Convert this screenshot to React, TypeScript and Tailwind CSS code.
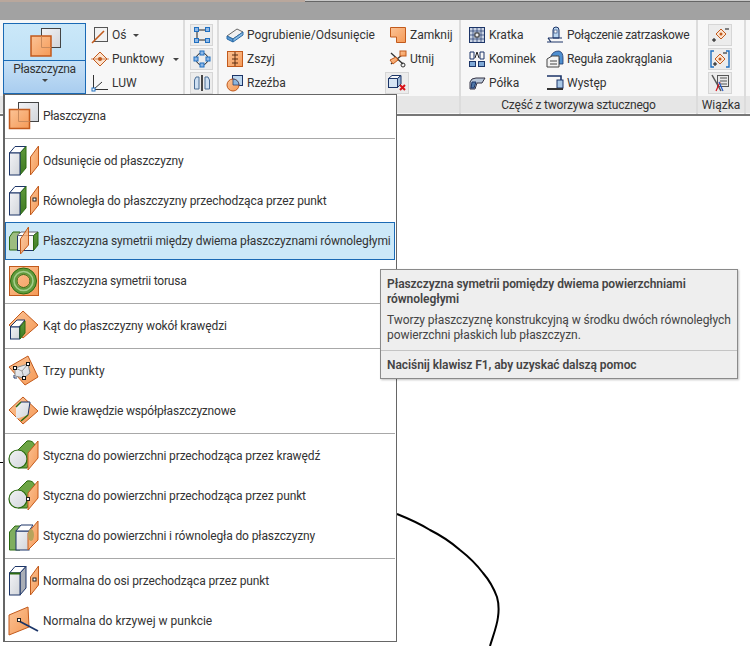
import type { ReactNode } from "react";

const OR = "url(#go)";
const ORD = "#c25a1c";
const GR = "url(#gg)";
const GRD = "#2b6a10";
const NV = "#1c3568";
const GY = "url(#gb)";
const BL = "#1f6fc0";

function Ic({ children, w = 34, h = 40 }: { children: ReactNode; w?: number; h?: number }) {
  return (
    <svg width={w} height={h} viewBox={`0 0 ${w} ${h}`} className="shrink-0">
      {children}
    </svg>
  );
}

// bryla z zielonym bokiem
function Box({ side = GR }: { side?: string }) {
  return (
    <>
      <polygon points="2.5,12 8,5.5 19,5.5 13,12" fill="#fff" stroke={NV} />
      <polygon points="13,12 19,5.5 19,27 13,34" fill={side} stroke={GRD} />
      <rect x="2.5" y="12" width="10.5" height="22" fill={GY} stroke={NV} />
    </>
  );
}

function SidePlane({ dot }: { dot?: boolean }) {
  return (
    <>
      <polygon points="23.5,16 31.5,5 31.5,24 23.5,34" fill={OR} stroke={ORD} />
      {dot && <rect x="26" y="17" width="3" height="3" fill="#fff" stroke="#222" strokeWidth="1" />}
    </>
  );
}

function Cyl() {
  return (
    <>
      <path d="M11,14 L20,5 C26,4 28,8 28,12 L20,32 L11,32 Z" fill="#6da544" stroke={GRD} />
      <circle cx="11" cy="23" r="9" fill={GY} stroke={GRD} strokeWidth="1.2" />
    </>
  );
}

const PlaneIcon = () => (
  <Ic>
    <rect x="11.5" y="6.5" width="20" height="19" fill={GY} stroke="#444" />
    <rect x="2.5" y="13.5" width="20" height="19" fill={OR} stroke={ORD} strokeWidth="1.5" />
    <path d="M11.5,13.5 V25.5 H22.5" fill="none" stroke="#c98a5c" />
  </Ic>
);
const OffsetIcon = () => (
  <Ic>
    <Box />
    <SidePlane />
  </Ic>
);
const ParallelIcon = () => (
  <Ic>
    <Box />
    <SidePlane dot />
  </Ic>
);
const MidIcon = () => (
  <Ic>
    <polygon points="2.5,16 6,11 13,11 13,29 2.5,29" fill="#9dbd80" stroke={GRD} />
    <rect x="10.5" y="14.5" width="16" height="15" fill="#f6f7f8" stroke={NV} />
    <polygon points="10,14.5 14,11 31,11 26.5,14.5" fill="#fff" stroke="#667" />
    <polygon points="26.5,29.5 31,24 31,11 26.5,14.5" fill={GR} stroke={GRD} />
    <polygon points="13.5,18 21.5,6 21.5,24 13.5,33" fill={OR} fillOpacity="0.85" stroke={ORD} />
  </Ic>
);
const TorusIcon = () => (
  <Ic>
    <rect x="2.5" y="5.5" width="29" height="29" fill={OR} stroke={ORD} />
    <circle cx="16.5" cy="20" r="10" fill="none" stroke="#5f9a3c" strokeWidth="6" />
    <circle cx="16.5" cy="20" r="9.5" fill="none" stroke="#a5cc8a" strokeWidth="1.6" />
    <circle cx="16.5" cy="20" r="13" fill="none" stroke={GRD} />
    <circle cx="16.5" cy="20" r="6.5" fill="none" stroke={GRD} />
  </Ic>
);
const AngleIcon = () => (
  <Ic>
    <polygon points="16,5 31,19 16,32 2,19" fill={OR} stroke={ORD} />
    <polygon points="3,21 10,14 18,14 12,21" fill="#fff" stroke={NV} />
    <rect x="3.5" y="21" width="9" height="12" fill={GY} stroke={NV} />
    <polygon points="13,21 18,15 18,27 13,33" fill={GR} stroke={GRD} />
  </Ic>
);
const ThreeIcon = () => (
  <Ic>
    <polygon points="2,16 21,5 31,26 18,34" fill={OR} stroke={ORD} />
    <polygon points="8,17 21,13 23,22 17,27 8,25" fill={GY} stroke="#8a8a8a" />
    <path d="M8,17 L15,20 L21,13 M15,20 L17,27" fill="none" stroke="#9a9a9a" />
    <path d="M7,24 V27 H10" fill="none" stroke={NV} />
    <rect x="6.5" y="15.5" width="3" height="3" fill="#fff" stroke="#111" />
    <rect x="19.5" y="11.5" width="3" height="3" fill="#fff" stroke="#111" />
    <rect x="15.5" y="25.5" width="3" height="3" fill="#fff" stroke="#111" />
  </Ic>
);
const TwoEdgesIcon = () => (
  <Ic>
    <polygon points="16,6 31,20 16,33 2,19" fill={OR} stroke={ORD} />
    <polygon points="9,16 14,11 23,11 21,24 9,28" fill={GY} />
    <line x1="9" y1="16" x2="14" y2="11" stroke={GRD} strokeWidth="1.5" />
    <line x1="14" y1="11" x2="23" y2="11" stroke={NV} />
    <line x1="23" y1="11" x2="21" y2="24" stroke={NV} />
    <line x1="21" y1="24" x2="14" y2="30" stroke={GRD} strokeWidth="1.5" />
  </Ic>
);
const TanEdgeIcon = () => (
  <Ic>
    <Cyl />
    <polygon points="21,17 31,5 31,22 21,34" fill={OR} stroke={ORD} />
  </Ic>
);
const TanPointIcon = () => (
  <Ic>
    <Cyl />
    <polygon points="21,17 31,5 31,22 21,34" fill={OR} stroke={ORD} />
    <rect x="19.5" y="21.5" width="3" height="3" fill="#fff" stroke="#222" />
  </Ic>
);
const TanParallelIcon = () => (
  <Ic>
    <polygon points="2.5,16 8,10 13,10 13,34 2.5,34" fill="#7fae5e" stroke={GRD} />
    <rect x="9" y="15" width="13" height="19" fill={GY} stroke={NV} />
    <polygon points="9,15 14,9 26,9 22,15" fill="#fff" stroke={NV} />
    <polygon points="21,17 31,5 31,24 21,34" fill={OR} stroke={ORD} />
    <ellipse cx="24" cy="19" rx="3" ry="6" fill="#b7a35c" />
  </Ic>
);
const NormalAxisIcon = () => (
  <Ic>
    <polygon points="2.5,12 8,5.5 19,5.5 13,12" fill="#fff" stroke={NV} />
    <polygon points="13,12 19,5.5 19,27 13,34" fill="#a9aeb6" stroke={NV} />
    <rect x="2.5" y="12" width="10.5" height="22" fill={GY} stroke={NV} />
    <line x1="3" y1="12.5" x2="13" y2="12.5" stroke={GRD} strokeWidth="2" />
    <SidePlane dot />
  </Ic>
);
const NormalCurveIcon = () => (
  <Ic>
    <polygon points="2,14 21,6 22,26 2,34" fill={OR} stroke={ORD} />
    <line x1="12" y1="20" x2="31" y2="30" stroke={NV} strokeWidth="1.8" />
    <rect x="10.5" y="17.5" width="3" height="3" fill="#fff" stroke="#222" />
  </Ic>
);

function Smi({ children }: { children: ReactNode }) {
  return (
    <svg width="18" height="18" viewBox="0 0 18 18" className="shrink-0">
      {children}
    </svg>
  );
}

const AxisIco = () => (
  <Smi>
    <rect x="3.5" y="1.5" width="13" height="14" fill="#f2f2f2" stroke="#555" />
    <line x1="1" y1="17" x2="13" y2="5" stroke={ORD} strokeWidth="1.6" />
  </Smi>
);
const PointIco = () => (
  <Smi>
    <polygon points="9,2 16,9 9,16 2,9" fill="#fbe3cf" stroke={ORD} />
    <circle cx="9" cy="9" r="2" fill={ORD} />
    <line x1="0" y1="9" x2="18" y2="9" stroke={ORD} strokeWidth="0.7" />
  </Smi>
);
const UcsIco = () => (
  <Smi>
    <path d="M2.5,1 V15.5 H17 M2.5,15.5 L11,8" fill="none" stroke="#333" />
    <rect x="1" y="14" width="3" height="3" fill="#fff" stroke={BL} />
  </Smi>
);
const ThickenIco = () => (
  <Smi>
    <polygon points="1,10 11,3 17,6 7,13" fill="#f1f1f1" stroke="#666" />
    <polygon points="1,10 7,13 7,16 1,13" fill="#5b9bd5" stroke="#2c6ca8" />
    <polygon points="7,13 17,6 17,9 7,16" fill="#8bbce4" stroke="#2c6ca8" />
  </Smi>
);
const StitchIco = () => (
  <Smi>
    <rect x="1.5" y="1.5" width="15" height="15" fill={OR} stroke={ORD} />
    <path d="M9,2 V16 M6,5 H12 M6,9 H12 M6,13 H12" stroke="#5a2c10" fill="none" />
  </Smi>
);
const SculptIco = () => (
  <Smi>
    <rect x="6.5" y="1.5" width="10" height="10" fill="#bcd7ef" stroke={NV} />
    <circle cx="7" cy="11" r="6" fill={OR} stroke={ORD} />
    <path d="M7,5 A6,6 0 0 1 13,11 H7 Z" fill="#8db6dd" stroke={NV} strokeWidth="0.7" />
  </Smi>
);
const CloseIco = () => (
  <Smi>
    <path d="M1.5,1.5 H16.5 V16.5 H7.5 V11 H1.5 Z" fill={OR} stroke={ORD} />
  </Smi>
);
const TrimIco = () => (
  <Smi>
    <path d="M2,3 L14,14 M2,14 L13,5" stroke="#333" strokeWidth="1.3" />
    <circle cx="14" cy="15" r="2" fill="none" stroke="#333" />
    <polygon points="1,10 7,7 9,10 4,14" fill={OR} stroke={ORD} />
    <rect x="11" y="1" width="6" height="5" fill={OR} stroke={ORD} />
  </Smi>
);
const GridIco = () => (
  <Smi>
    <rect x="1.5" y="1.5" width="15" height="15" fill="#c9d3e3" stroke={NV} />
    <path d="M5,2 V16 M9,2 V16 M13,2 V16 M2,5 H16 M2,9 H16 M2,13 H16" stroke={NV} strokeWidth="0.7" />
    <rect x="7" y="7" width="4" height="4" fill="#eee" stroke="#222" />
  </Smi>
);
const BossIco = () => (
  <Smi>
    <path d="M2,2 H6 V9 H2 Z M12,2 H16 V9 H12 Z" fill="none" stroke={NV} />
    <path d="M7,8 L9,2 L11,8" fill="none" stroke="#222" />
    <rect x="1.5" y="11.5" width="6" height="5" fill="#7fa9d6" stroke={NV} />
    <rect x="10.5" y="11.5" width="6" height="5" fill="#7fa9d6" stroke={NV} />
  </Smi>
);
const ShelfIco = () => (
  <Smi>
    <path d="M2,8 Q3,4 8,4 H17 L14,9 H9 L7,15 H2 Z" fill="#b9c7d8" stroke="#334" />
    <path d="M4,8 H8 L6,14 H3 Z" fill="#4f78a8" stroke={NV} />
  </Smi>
);
const SnapIco = () => (
  <Smi>
    <path d="M7,12 V4 Q7,1 10,1 Q13,1 13,4 V12 Z" fill="#b8d4ef" stroke={NV} />
    <path d="M2,12 H16 M1,16 H17 M2,12 L5,16" stroke={NV} fill="none" strokeWidth="1.2" />
    <rect x="8" y="4" width="3" height="3" fill="#fff" stroke={NV} strokeWidth="0.6" />
  </Smi>
);
const RuleIco = () => (
  <Smi>
    <path d="M5,10 V6 Q7,1 13,1 Q17,2 17,8 V14 H13 V8 Q11,5 8,7 V10 Z" fill="#4f8fd0" stroke={NV} strokeWidth="0.8" />
    <path d="M1,9 L6,6 H13 V17 H1 Z" fill="#f3f3f3" stroke="#444" />
    <path d="M4,11 H11 M4,14 H11" stroke="#444" />
  </Smi>
);
const LipIco = () => (
  <Smi>
    <path d="M1,2 H15 V9" fill="none" stroke={NV} strokeWidth="1.6" />
    <rect x="11" y="6" width="6" height="8" fill="#a9c8e6" stroke={NV} />
    <path d="M1,15 H17" stroke="#333" strokeWidth="2" />
  </Smi>
);

function SqBtn({ w = 23, children }: { w?: number; children: ReactNode }) {
  return (
    <div
      className={`flex h-[22px] items-center justify-center border border-[#d6d6d6] bg-[#ececec] ${w === 24 ? "w-6" : "w-[23px]"}`}
    >
      {children}
    </div>
  );
}

function Small({
  icon,
  label,
  arrowGap,
  track = "",
}: {
  icon: ReactNode;
  label: string;
  arrowGap?: string;
  track?: string;
}) {
  return (
    <div className="flex h-6 items-center whitespace-nowrap">
      <span className="flex w-[21px] shrink-0">{icon}</span>
      <span className={`pt-px ${track}`}>{label}</span>
      {arrowGap && <span className={`h-0 w-0 border-x-[3px] border-t-[3px] border-x-transparent border-t-[#444] ${arrowGap}`} />}
    </div>
  );
}

function Panel({ width, title, track = "", children }: { width: string; title?: string; track?: string; children: ReactNode }) {
  return (
    <div className={`flex h-full flex-col border-r-2 border-r-[#dcdcdc] ${width}`}>
      <div className="flex h-[76px] bg-[#f7f7f7] pt-[3px]">{children}</div>
      <div className={`flex h-[17px] items-center justify-center bg-[#e6e6e6] pt-px text-[#333] ${track}`}>{title}</div>
    </div>
  );
}

type Row = { icon: ReactNode; label: string; active?: boolean; track?: string };

const sections: Row[][] = [
  [{ icon: <PlaneIcon />, label: "Płaszczyzna", track: "tracking-[-0.35px]" }],
  [
    { icon: <OffsetIcon />, label: "Odsunięcie od płaszczyzny" },
    { icon: <ParallelIcon />, label: "Równoległa do płaszczyzny przechodząca przez punkt" },
    { icon: <MidIcon />, label: "Płaszczyzna symetrii między dwiema płaszczyznami równoległymi", active: true },
    { icon: <TorusIcon />, label: "Płaszczyzna symetrii torusa", track: "tracking-[-0.2px]" },
  ],
  [{ icon: <AngleIcon />, label: "Kąt do płaszczyzny wokół krawędzi" }],
  [
    { icon: <ThreeIcon />, label: "Trzy punkty", track: "tracking-[0.05px]" },
    { icon: <TwoEdgesIcon />, label: "Dwie krawędzie współpłaszczyznowe", track: "tracking-[-0.2px]" },
  ],
  [
    { icon: <TanEdgeIcon />, label: "Styczna do powierzchni przechodząca przez krawędź" },
    { icon: <TanPointIcon />, label: "Styczna do powierzchni przechodząca przez punkt" },
    { icon: <TanParallelIcon />, label: "Styczna do powierzchni i równoległa do płaszczyzny" },
  ],
  [
    { icon: <NormalAxisIcon />, label: "Normalna do osi przechodząca przez punkt" },
    { icon: <NormalCurveIcon />, label: "Normalna do krzywej w punkcie", track: "tracking-[0.02px]" },
  ],
];

function MenuRow({ row }: { row: Row }) {
  return (
    <div className="flex h-10 items-center">
      <div
        className={`mr-px flex w-full items-center gap-0.5 border pl-px ${
          row.active ? "h-[38px] border-[#1b6ab5] bg-[#cce8f8]" : "h-10 border-transparent"
        }`}
      >
        {row.icon}
        <span className={`whitespace-nowrap pt-px ${row.track ?? "tracking-[-0.12px]"}`}>{row.label}</span>
      </div>
    </div>
  );
}

export default function App() {
  return (
    <div className="relative h-[646px] w-[750px] overflow-hidden bg-white font-['Roboto',sans-serif] text-xs leading-[15px] text-[#333]">
      <svg width="0" height="0" className="absolute">
        <defs>
          <linearGradient id="go" x1="0" y1="0" x2="1" y2="1">
            <stop offset="0" stopColor="#fbc396" />
            <stop offset="1" stopColor="#f59a57" />
          </linearGradient>
          <linearGradient id="gg" x1="0" y1="0" x2="0" y2="1">
            <stop offset="0" stopColor="#5f9a3c" />
            <stop offset="1" stopColor="#3e7a22" />
          </linearGradient>
          <linearGradient id="gb" x1="0" y1="0" x2="1" y2="1">
            <stop offset="0" stopColor="#f2f3f6" />
            <stop offset="1" stopColor="#d2d5da" />
          </linearGradient>
        </defs>
      </svg>

      {/* pasek okna */}
      <div className="flex h-5 flex-col bg-[#a2a2a2]">
        <div className="flex h-0.5">
          <div className="w-[305px] bg-[#b9a79c]" />
          <div className="flex-1 border-b border-[#666] bg-[#c9c9c9]" />
        </div>
      </div>

      {/* wstazka */}
      <div className="flex h-[96px] border-b-2 border-[#777] bg-[#f7f7f7]">
        <Panel width="w-[185px]">
          <div className="ml-[3px] flex h-[71px] w-[83px] flex-col border border-[#1b6ab5]">
            <div className="flex h-9 items-center justify-center bg-gradient-to-b from-[#cbe8f9] to-[#bfe1f6]">
              <svg width="34" height="30" viewBox="0 0 34 30">
                <rect x="13.5" y="1.5" width="19" height="19" fill={GY} stroke="#444" />
                <rect x="3" y="9" width="20" height="20" fill={OR} stroke={ORD} strokeWidth="1.5" />
                <path d="M13.5,9 V20.5 H23" fill="none" stroke="#c98a5c" />
              </svg>
            </div>
            <div className="flex flex-1 flex-col items-center border-t border-[#1b6ab5] bg-gradient-to-b from-[#c6e0f6] to-[#a9cdef] pt-px">
              <span className="tracking-[-0.35px]">Płaszczyzna</span>
              <span className="mt-0.5 h-0 w-0 border-x-[3px] border-t-[3px] border-x-transparent border-t-[#444]" />
            </div>
          </div>
          <div className="ml-[5px] flex flex-col">
            <Small icon={<AxisIco />} label="Oś" arrowGap="ml-[7px]" />
            <Small icon={<PointIco />} label="Punktowy" arrowGap="ml-[9px]" />
            <Small icon={<UcsIco />} label="LUW" />
          </div>
        </Panel>
        <Panel width="w-[34px]">
          <div className="ml-[5px] flex flex-col gap-0.5 pt-px">
            <SqBtn>
              <svg width="18" height="18" viewBox="0 0 18 18">
                <path d="M4,4 H14 M4,4 V14 H14" stroke="#222" fill="none" />
                <rect x="1.5" y="1.5" width="4" height="4" fill="#8fb8e6" stroke={BL} />
                <rect x="12.5" y="1.5" width="4" height="4" fill="#8fb8e6" stroke={BL} />
                <rect x="1.5" y="12.5" width="4" height="4" fill="#8fb8e6" stroke={BL} />
                <rect x="12.5" y="12.5" width="4" height="4" fill="#8fb8e6" stroke={BL} />
              </svg>
            </SqBtn>
            <SqBtn>
              <svg width="18" height="18" viewBox="0 0 18 18">
                <circle cx="9" cy="9" r="6" fill="none" stroke="#222" />
                <rect x="7" y="1" width="4" height="4" fill="#8fb8e6" stroke={BL} />
                <rect x="13" y="7" width="4" height="4" fill="#8fb8e6" stroke={BL} />
                <rect x="7" y="13" width="4" height="4" fill="#8fb8e6" stroke={BL} />
                <rect x="1" y="7" width="4" height="4" fill="#8fb8e6" stroke={BL} />
              </svg>
            </SqBtn>
            <SqBtn>
              <svg width="18" height="18" viewBox="0 0 18 18">
                <line x1="9" y1="1" x2="9" y2="17" stroke="#111" strokeWidth="1.5" />
                <path d="M6,3 H3 L1.5,6 V15 H6 Z M12,3 H15 L16.5,6 V15 H12 Z" fill="#cfe0f2" stroke="#4b6e96" />
              </svg>
            </SqBtn>
          </div>
        </Panel>
        <Panel width="w-[242px]">
          <div className="ml-[7px] flex w-[163px] shrink-0 flex-col">
            <Small icon={<ThickenIco />} label="Pogrubienie/Odsunięcie" />
            <Small icon={<StitchIco />} label="Zszyj" />
            <Small icon={<SculptIco />} label="Rzeźba" />
          </div>
          <div className="flex flex-col">
            <Small icon={<CloseIco />} label="Zamknij" />
            <Small icon={<TrimIco />} label="Utnij" />
            <div className="-ml-1 pt-px">
              <SqBtn w={24}>
                <svg width="20" height="18" viewBox="0 0 20 18">
                  <rect x="1.5" y="4.5" width="9" height="9" fill="#d6e4f4" stroke={NV} />
                  <polygon points="1.5,4.5 5,1.5 14,1.5 10.5,4.5" fill="#f4f6f8" stroke={NV} />
                  <polygon points="10.5,4.5 14,1.5 14,10 10.5,13.5" fill="#9db8d6" stroke={NV} />
                  <path d="M13,11 L18,16 M18,11 L13,16" stroke="#d8121a" strokeWidth="2" />
                </svg>
              </SqBtn>
            </div>
          </div>
        </Panel>
        <Panel width="w-[237px]" title="Część z tworzywa sztucznego" track="tracking-[-0.2px]">
          <div className="ml-[7px] flex w-[78px] shrink-0 flex-col">
            <Small icon={<GridIco />} label="Kratka" />
            <Small icon={<BossIco />} label="Kominek" />
            <Small icon={<ShelfIco />} label="Półka" />
          </div>
          <div className="flex flex-col">
            <Small icon={<SnapIco />} label="Połączenie zatrzaskowe" track="tracking-[-0.3px]" />
            <Small icon={<RuleIco />} label="Reguła zaokrąglania" track="tracking-[-0.15px]" />
            <Small icon={<LipIco />} label="Występ" />
          </div>
        </Panel>
        <Panel width="w-[48px]" title="Wiązka">
          <div className="ml-[10px] flex flex-col gap-0.5 pt-px">
            <SqBtn w={24}>
              <svg width="18" height="18" viewBox="0 0 18 18">
                <polygon points="10,3 15,8 10,13 5,8" fill="#fbe3cf" stroke={ORD} />
                <circle cx="10" cy="8" r="1.5" fill={ORD} />
                <path d="M14,3 H18 M1,14 H5 M3,12 V16" stroke="#111" />
              </svg>
            </SqBtn>
            <SqBtn w={24}>
              <svg width="20" height="18" viewBox="0 0 20 18">
                <polygon points="10,4 15,9 10,14 5,9" fill="#fbe3cf" stroke={ORD} />
                <circle cx="10" cy="9" r="1.5" fill={ORD} />
                <path d="M4,1 H1 V17 H4 M16,1 H19 V17 H16" fill="none" stroke={BL} strokeWidth="1.4" />
                <path d="M13,3 H17 M3,14 H7 M5,12 V16" stroke="#111" />
              </svg>
            </SqBtn>
            <SqBtn w={24}>
              <svg width="20" height="18" viewBox="0 0 20 18">
                <rect x="7.5" y="1.5" width="11" height="11" fill="#e8e8e8" stroke="#555" />
                <path d="M10,4 H17 M10,7 H17 M10,10 H17" stroke="#555" />
                <path d="M2,1 L11,17" stroke="#555" strokeWidth="1.5" />
                <path d="M6,17 L10,8" stroke="#d8121a" strokeWidth="1.2" />
                <path d="M13,17 L9,8" stroke="#2158c8" strokeWidth="1.2" />
              </svg>
            </SqBtn>
          </div>
        </Panel>
        <div className="flex h-full flex-1 flex-col">
          <div className="h-[76px]" />
          <div className="h-[17px] bg-[#e6e6e6]" />
        </div>
      </div>

      {/* szkic w tle */}
      <svg width="750" height="646" viewBox="0 0 750 646" className="pointer-events-none absolute inset-0">
        <path
          d="M397,514 C412,520 422,525 430,530 C442,536 452,543 460,550 C469,557 477,565 483,573 C490,581 494,589 497,597 C499,604 499,610 498,617 C497,626 493,636 490,646"
          fill="none"
          stroke="#000"
          strokeWidth="2"
        />
        <line x1="0" y1="462.5" x2="4" y2="462.5" stroke="#000" />
      </svg>

      {/* menu */}
      <div className="absolute left-[3px] top-[94px] flex h-[548px] w-[394px] flex-col border border-[#666] border-l-2 bg-white">
        {sections.map((rows, i) => (
          <div key={i}>
            {i > 0 && <div className="mr-px h-px bg-[#a8a8a8]" />}
            <div className={i === 0 ? "pb-0.5 pt-px" : i === sections.length - 1 ? "pt-0.5" : "py-0.5"}>
              {rows.map((r) => (
                <MenuRow key={r.label} row={r} />
              ))}
            </div>
          </div>
        ))}
      </div>

      {/* podpowiedz */}
      <div className="absolute left-[380px] top-[269px] flex h-[110px] w-[358px] flex-col border border-[#8a8a8a] bg-[#eeeeee] tracking-[-0.07px] text-[#444] shadow-[1px_1px_2px_rgba(0,0,0,0.25)]">
        <div className="px-1.5 pt-[7px] font-semibold">
          Płaszczyzna symetrii pomiędzy dwiema powierzchniami
          <br />
          równoległymi
        </div>
        <div className="whitespace-nowrap px-1.5 pt-1.5">
          Tworzy płaszczyznę konstrukcyjną w środku dwóch równoległych
          <br />
          powierzchni płaskich lub płaszczyzn.
        </div>
        <div className="mt-[7px] border-t border-[#c4c4c4] px-1.5 pt-[7px] font-semibold">
          Naciśnij klawisz F1, aby uzyskać dalszą pomoc
        </div>
      </div>
    </div>
  );
}
